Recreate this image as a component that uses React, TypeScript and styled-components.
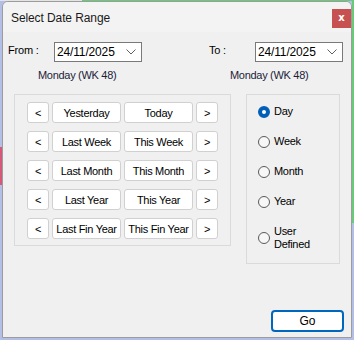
import { FC, useState } from 'react';
import styled, { createGlobalStyle } from 'styled-components';

const GlobalStyle = createGlobalStyle`
  html, body {
    margin: 0;
    padding: 0;
    background: #b3bfe6;
  }
  * {
    box-sizing: border-box;
  }
`;

const FONT = `'Liberation Sans', Arial, sans-serif`;

const SHORTCUTS: [string, string][] = [
  ['Yesterday', 'Today'],
  ['Last Week', 'This Week'],
  ['Last Month', 'This Month'],
  ['Last Year', 'This Year'],
  ['Last Fin Year', 'This Fin Year'],
];

const PERIODS = ['Day', 'Week', 'Month', 'Year', 'User\nDefined'];

const Chevron: FC = () => (
  <svg width="10" height="6" viewBox="0 0 10 6">
    <polyline points="0.5,0.5 5,5 9.5,0.5" fill="none" stroke="#606060" strokeWidth="1" />
  </svg>
);

const DateCombo: FC<{ value: string }> = ({ value }) => (
  <Combo>
    <ComboText>{value}</ComboText>
    <Chevron />
  </Combo>
);

const App: FC = () => {
  const [period, setPeriod] = useState<string>('Day');

  return (
    <>
      <GlobalStyle />
      <Desktop>
        <Dialog>
          <TitleBar>
            <Title>Select Date Range</Title>
            <CloseButton>x</CloseButton>
          </TitleBar>

          <DateRow>
            <Field>
              <FieldLabel>From :</FieldLabel>
              <DateCombo value="24/11/2025" />
            </Field>
            <Field>
              <FieldLabel>To :</FieldLabel>
              <DateCombo value="24/11/2025" />
            </Field>
          </DateRow>

          <WeekRow>
            <WeekText>Monday (WK 48)</WeekText>
            <WeekText>Monday (WK 48)</WeekText>
          </WeekRow>

          <GroupsRow>
            <ShortcutGroup>
              {SHORTCUTS.map(([last, current]) => (
                <ShortcutRow key={last}>
                  <ArrowButton>&lt;</ArrowButton>
                  <RangeButton>{last}</RangeButton>
                  <RangeButton>{current}</RangeButton>
                  <ArrowButton>&gt;</ArrowButton>
                </ShortcutRow>
              ))}
            </ShortcutGroup>

            <PeriodGroup>
              {PERIODS.map((p) => (
                <RadioItem key={p} onClick={() => setPeriod(p)}>
                  <RadioDot checked={period === p} />
                  <RadioLabel>{p}</RadioLabel>
                </RadioItem>
              ))}
            </PeriodGroup>
          </GroupsRow>

          <Footer>
            <GoButton>Go</GoButton>
          </Footer>
        </Dialog>
      </Desktop>
    </>
  );
};

export default App;

// the spreadsheet peeking out behind the dialog
const Desktop = styled.div`
  width: 354px;
  height: 340px;
  padding: 1px 2px 2px 2px;
  font-family: ${FONT};
  background:
    linear-gradient(to bottom, transparent 147px, #d6587a 147px, #d6587a 185px, transparent 185px) left top / 2px 100% no-repeat,
    linear-gradient(to bottom, #66cc78 223px, #b3bfe6 223px) right top / 2px 100% no-repeat,
    linear-gradient(to right, #e4e4e4 82px, #66cc78 82px) left top / 100% 1px no-repeat,
    #b3bfe6;
`;

const Dialog = styled.div`
  width: 350px;
  height: 337px;
  display: flex;
  flex-direction: column;
  background: #f0f0f0;
  border: 1px solid #9c9c9c;
  border-radius: 6px 6px 0 0;
  overflow: hidden;
`;

const TitleBar = styled.div`
  height: 30px;
  flex-shrink: 0;
  display: flex;
  align-items: flex-start;
  justify-content: space-between;
  background: #f3f3f3;
`;

const Title = styled.div`
  margin: 9px 0 0 8px;
  font-size: 12px;
  line-height: 14px;
  color: #1a1a1a;
  letter-spacing: -0.1px;
`;

const CloseButton = styled.div`
  width: 19px;
  height: 19px;
  margin-top: 7px;
  display: flex;
  align-items: center;
  justify-content: center;
  background: #c75050;
  color: #ffffff;
  font-family: 'DejaVu Sans', sans-serif;
  font-size: 10px;
  font-weight: bold;
  line-height: 1;
  padding-bottom: 2px;
`;

const DateRow = styled.div`
  margin-top: 10px;
  padding: 0 8px 0 5px;
  display: flex;
  justify-content: space-between;
`;

const Field = styled.div`
  display: flex;
  align-items: flex-start;
`;

const FieldLabel = styled.div`
  width: 46px;
  padding-top: 2px;
  font-size: 11px;
  line-height: 13px;
  letter-spacing: -0.2px;
  color: #000;
`;

const Combo = styled.div`
  width: 88px;
  height: 20px;
  display: flex;
  align-items: center;
  justify-content: space-between;
  padding: 0 5px 0 2px;
  background: #ffffff;
  border: 1px solid #7a7a7a;
`;

const ComboText = styled.span`
  font-size: 12px;
  letter-spacing: -0.15px;
  color: #000;
`;

const WeekRow = styled.div`
  margin-top: 6px;
  padding-left: 35px;
  display: grid;
  grid-template-columns: 192px auto;
`;

const WeekText = styled.div`
  font-size: 11px;
  line-height: 14px;
  letter-spacing: -0.3px;
  color: #1c1c3a;
`;

const GroupsRow = styled.div`
  margin-top: 12px;
  padding-left: 11px;
  display: flex;
  align-items: flex-start;
  gap: 15px;
`;

const GroupBox = styled.div`
  border: 1px solid #dadada;
`;

const ShortcutGroup = styled(GroupBox)`
  width: 217px;
  padding: 7px 12px 6px 12px;
  display: flex;
  flex-direction: column;
  gap: 8px;
`;

const ShortcutRow = styled.div`
  display: flex;
  gap: 3px;
`;

const BaseButton = styled.button`
  height: 21px;
  padding: 0;
  background: #ffffff;
  border: 1px solid #d0d0d0;
  border-radius: 3px;
  font-family: ${FONT};
  font-size: 11px;
  letter-spacing: -0.3px;
  color: #000;
  cursor: pointer;
`;

const ArrowButton = styled(BaseButton)`
  width: 22px;
`;

const RangeButton = styled(BaseButton)`
  width: 69px;
`;

const PeriodGroup = styled(GroupBox)`
  width: 94px;
  height: 170px;
  padding: 10px 0 0 11px;
  display: flex;
  flex-direction: column;
  gap: 17px;
`;

const RadioItem = styled.div`
  display: flex;
  align-items: center;
  gap: 4px;
  cursor: pointer;
`;

const RadioDot = styled.span<{ checked: boolean }>`
  width: 12px;
  height: 12px;
  flex-shrink: 0;
  border-radius: 50%;
  border: ${({ checked }) => (checked ? '4px solid #005fb8' : '1px solid #5a5a5a')};
  background: ${({ checked }) => (checked ? '#ffffff' : '#f7f7f7')};
`;

const RadioLabel = styled.span`
  font-size: 11px;
  line-height: 13px;
  letter-spacing: -0.3px;
  white-space: pre-line;
  color: #000;
`;

const Footer = styled.div`
  margin-top: auto;
  padding: 0 7px 5px 0;
  display: flex;
  justify-content: flex-end;
`;

const GoButton = styled(BaseButton)`
  width: 73px;
  height: 22px;
  border: 2px solid #0067c0;
  border-radius: 4px;
  font-size: 12px;
  letter-spacing: 0;
`;
